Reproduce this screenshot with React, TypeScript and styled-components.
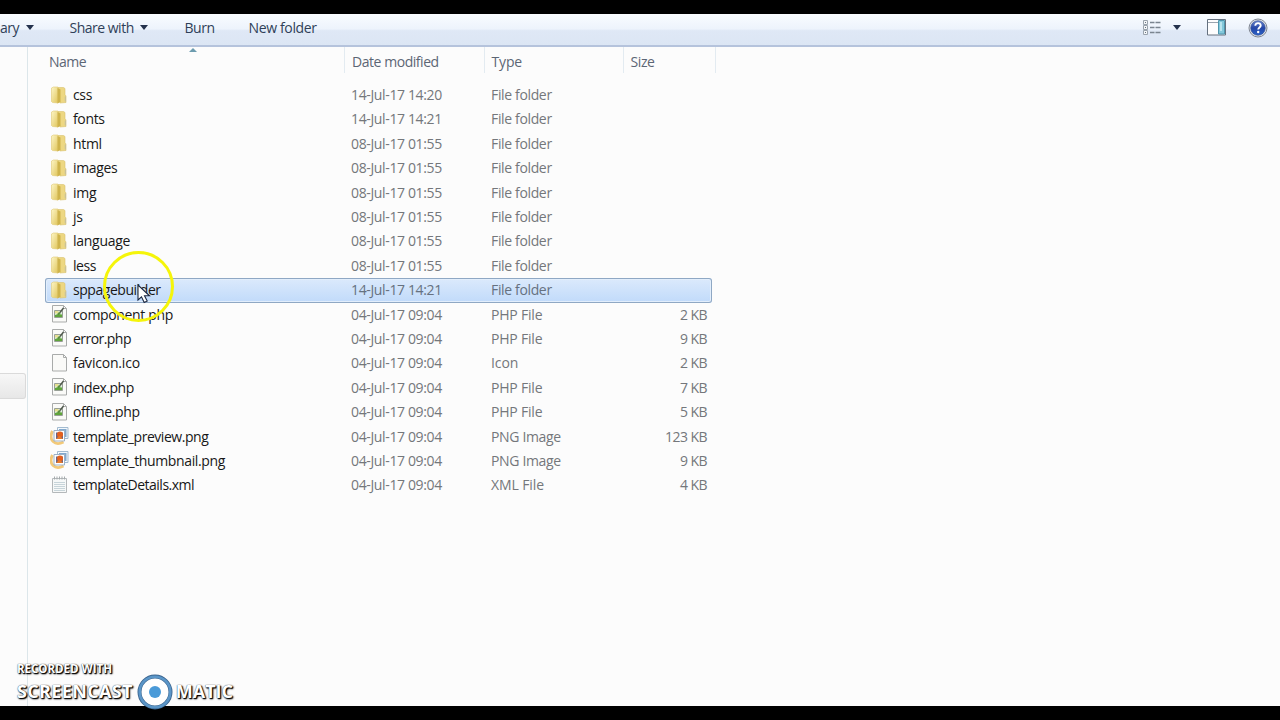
import React from 'react';
import styled, { createGlobalStyle } from 'styled-components';

const GlobalStyle = createGlobalStyle`
  * { box-sizing: border-box; }
  body { margin: 0; background: #000; overflow: hidden; }
`;

const Screen = styled.div`
  position: relative;
  width: 1280px;
  height: 720px;
  padding: 14px 0;
  display: flex;
  flex-direction: column;
  background: #000;
  font-family: 'Open Sans', 'Noto Sans', sans-serif;
  font-size: 14px;
  line-height: 20px;
  white-space: nowrap;
`;

const Label = styled.span<{ $track?: number }>`
  letter-spacing: ${p => p.$track ?? 0}px;
`;

const Toolbar = styled.div`
  flex: none;
  height: 33px;
  display: flex;
  align-items: center;
  padding: 0 12px 4px 0;
  color: #2f3f58;
  background: linear-gradient(#f9fcff 0, #edf3fc 48%, #dfe8f6 54%, #dce6f4 100%);
  border-bottom: 2px solid #b5c3dc;
`;

const Command = styled.div<{ $width: number }>`
  display: flex;
  align-items: center;
  width: ${p => p.$width}px;
`;

const Arrow = styled.span<{ $left: number }>`
  margin-left: ${p => p.$left}px;
  border: solid transparent;
  border-width: 5px 4.5px 0;
  border-top-color: #25324d;
`;

const Tools = styled.div`
  margin-left: auto;
  display: flex;
  align-items: center;
`;

const ToolIcon = styled.svg<{ $gap: number }>`
  display: block;
  margin-left: ${p => p.$gap}px;
`;

const Window = styled.div`
  flex: 1;
  min-height: 0;
  display: flex;
  background: #fcfcfc;
`;

const NavPane = styled.div`
  width: 28px;
  border-right: 1px solid #dce6ea;
  padding-top: 326px;
`;

const NavItem = styled.div`
  width: 26px;
  height: 26px;
  border: 1px solid #dadada;
  border-left: 0;
  border-radius: 0 3px 3px 0;
  background: linear-gradient(#f7f7f7, #e7e7e7);
`;

const FileList = styled.div`
  width: 688px;
  padding-left: 17px;
`;

const Header = styled.div`
  position: relative;
  display: grid;
  grid-template-columns: 300px 140px 139px 92px;
  height: 26px;
  margin-bottom: 10.2px;
  color: #5c6675;
`;

const HeaderCell = styled.div<{ $pad: number }>`
  padding: 5px 0 0 ${p => p.$pad}px;
  border-right: 1px solid #e3ebf1;
`;

const SortMark = styled.svg`
  position: absolute;
  left: 144px;
  top: 0;
`;

const Row = styled.div<{ $selected?: boolean }>`
  display: grid;
  grid-template-columns: 28px 278px 140px 130px 86px;
  align-items: center;
  width: 667px;
  height: 24.4px;
  padding-bottom: 0.6px;
  border-radius: 3px;
  color: #74777b;
  ${p => p.$selected && `
    color: #667180;
    background: linear-gradient(#dceafc, #c0dafa);
    box-shadow: inset 0 0 0 1px #8fa8c4, inset 0 0 0 2px #e2eefc;
  `}
`;

const FileName = styled.span<{ $track: number }>`
  color: #181818;
  letter-spacing: ${p => p.$track}px;
`;

const Size = styled.span`
  text-align: right;
  letter-spacing: -0.55px;
`;

const FileIcon = styled.svg`
  display: block;
  margin-left: 5px;
`;

const Highlight = styled.svg`
  position: absolute;
  left: 102px;
  top: 250px;
`;

const Watermark = styled.div`
  position: absolute;
  left: 17px;
  top: 661px;
  color: #fff;
  font-family: 'Open Sans', sans-serif;
  font-weight: 700;
  text-shadow: 0 0 1px #222, 1px 1px 1px #000, 1px 1px 2px #000;
`;

const Recorded = styled.div`
  font-size: 11.5px;
  line-height: 15px;
`;

const Brand = styled.div`
  display: flex;
  align-items: center;
  height: 30px;
  font-size: 18px;
`;

const Ring = styled.svg`
  flex: none;
  margin: 2px 3px 0 4px;
`;

type Kind = 'folder' | 'php' | 'blank' | 'png' | 'xml';

const Page = () => (
  <path d="M2.5 .5h11l3 3v13.500h-14z M13.500 .5v3h3" fill="#fafaf8" stroke="#a9abaa" />
);

const Icon = ({ kind }: { kind: Kind }) => (
  <FileIcon width="20" height="19" viewBox="0 0 20 19">
    {kind === 'folder' && (
      <>
        <defs>
          <linearGradient id="front" x2="1" y2="1">
            <stop stopColor="#fdf6c6" />
            <stop offset="1" stopColor="#e0c55c" />
          </linearGradient>
        </defs>
        <path d="M8 1.500h5.500l1.500 1v6l1 1.500v6.500l-6 .5z" fill="#edd782" stroke="#d9c16d" strokeWidth=".6" />
        <path d="M1.500 2l2-1H8v16l-5.500-.5-1-1z" fill="url(#front)" stroke="#e0c974" strokeWidth=".6" />
        <path d="M7.500 2l3 1.500v12.500L7.500 17.500z" fill="#cfb44c" />
        <path d="M15.300 10.500v5" stroke="#c4bda0" />
      </>
    )}
    {(kind === 'php' || kind === 'blank') && <Page />}
    {kind === 'php' && (
      <>
        <path d="M4.500 5.500h8v7h-8z" fill="#e3eee4" stroke="#98a096" />
        <path d="M5 10l3-1 4 .5V12H5z" fill="#5fa53a" />
        <path d="M5 6h3.500v2.500H5z" fill="#e6e08f" />
        <path d="M8 9.500l2-2" stroke="#5c8f3e" strokeWidth="2" />
        <path d="M10 7.500l3.500-4.500" stroke="#4c5549" strokeWidth="1.400" />
      </>
    )}
    {kind === 'png' && (
      <>
        <path d="M2.500 4C-2 13 5 19.500 13.500 15" fill="none" stroke="#f2c979" strokeWidth="2.800" />
        <path d="M7.500 .5h10.500v11h-10.500z" fill="#f3f8fc" stroke="#a3bbd0" />
        <path d="M9 2h7.500v8H9z" fill="#83a9cd" />
        <path d="M4 3.500h10.500v10.500h-10.500z" fill="#fff" stroke="#9db1c6" />
        <path d="M6 5.500h7v6.500H6z" fill="#6f6480" />
        <circle cx="10" cy="7.500" r="3" fill="#e4601f" />
        <path d="M6 12l3.500-3.500L13 12z" fill="#e8792a" />
      </>
    )}
    {kind === 'xml' && (
      <>
        <path d="M2.500 2.500h14v14h-14z" fill="#f6f8f8" stroke="#b4b8ba" />
        <path d="M4.500 .5v3M7 .5v3M9.500 .5v3M12 .5v3M14.500 .5v3" stroke="#a5abad" />
        <path d="M4 6.500h11M4 8.500h11M4 10.500h11M4 12.500h11M4 14.500h11" stroke="#c7d4d9" />
      </>
    )}
  </FileIcon>
);

interface Entry { name: string; date: string; type: string; size?: string; kind: Kind; track: number }

const folder = (name: string, date = '08-Jul-17 01:55', track = -0.35): Entry => ({ name, date, type: 'File folder', kind: 'folder', track });
const file = (name: string, type: string, size: string, kind: Kind, track = -0.38): Entry => ({ name, date: '04-Jul-17 09:04', type, size, kind, track });

const typeTrack: Record<string, number> = { 'File folder': -0.35, 'PHP File': -0.2, 'PNG Image': -0.35, 'XML File': -0.1, Icon: -0.1 };

const entries: Entry[] = [
  folder('css', '14-Jul-17 14:20'),
  folder('fonts', '14-Jul-17 14:21'),
  folder('html'),
  folder('images'),
  folder('img', undefined, -0.2),
  folder('js'),
  folder('language', undefined, -0.28),
  folder('less', undefined, -0.45),
  folder('sppagebuilder', '14-Jul-17 14:21', -0.45),
  file('component.php', 'PHP File', '2 KB', 'php', -0.35),
  file('error.php', 'PHP File', '9 KB', 'php', -0.55),
  file('favicon.ico', 'Icon', '2 KB', 'blank', -0.2),
  file('index.php', 'PHP File', '7 KB', 'php', -0.5),
  file('offline.php', 'PHP File', '5 KB', 'php'),
  file('template_preview.png', 'PNG Image', '123 KB', 'png', -0.46),
  file('template_thumbnail.png', 'PNG Image', '9 KB', 'png'),
  file('templateDetails.xml', 'XML File', '4 KB', 'xml', -0.5),
];

export default function App() {
  return (
    <>
      <GlobalStyle />
      <Screen>
        <Toolbar>
          <Command $width={69.5}><Label $track={-0.5}>ary</Label><Arrow $left={7} /></Command>
          <Command $width={115}><Label $track={-0.5}>Share with</Label><Arrow $left={6} /></Command>
          <Command $width={64}><Label $track={-0.45}>Burn</Label></Command>
          <Command $width={80}><Label $track={-0.35}>New folder</Label></Command>
          <Tools>
            <ToolIcon $gap={0} width="18" height="16" viewBox="0 0 18 16">
              <path d="M.5.5h4v4h-4zM.5 5.5h4v4h-4zM.5 10.5h4v4h-4z" fill="#f4f6f8" stroke="#9ba4ae" />
              <path d="M2 2.5h1M2 7.5h1M2 12.5h1" stroke="#687482" />
              <path d="M7 2.5h4.500M12.500 2.500h5M7 7.500h4.500M12.500 7.500h5M7 12.500h4.500M12.500 12.500h5" stroke="#7b8590" strokeWidth="1.300" />
            </ToolIcon>
            <Arrow $left={12} />
            <ToolIcon $gap={26} width="19" height="17" viewBox="0 0 19 17">
              <path d="M.5.5h18v15.500H.5z" fill="#fdfdfe" stroke="#65717f" />
              <path d="M1 3.500h10" stroke="#9aa4af" />
              <path d="M11.500 1.500h6v13.500h-6z" fill="#83c8db" stroke="#4f96ae" />
              <path d="M14 3v9" stroke="#b9e4ee" strokeWidth="2" />
            </ToolIcon>
            <ToolIcon $gap={22} width="20" height="20" viewBox="0 0 20 20">
              <defs>
                <linearGradient id="help" x2="0" y2="1">
                  <stop stopColor="#6885cf" /><stop offset=".5" stopColor="#2446a6" /><stop offset="1" stopColor="#2b62c9" />
                </linearGradient>
              </defs>
              <circle cx="10" cy="10" r="9" fill="#dfe3ea" stroke="#808793" />
              <circle cx="10" cy="10" r="7.300" fill="url(#help)" stroke="#35508f" strokeWidth=".6" />
              <path d="M7.300 7.800c0-3.700 5.600-3.400 5.400-.2-.1 1.900-2.500 1.900-2.500 4" fill="none" stroke="#fff" strokeWidth="1.900" />
              <circle cx="10.200" cy="14" r="1.200" fill="#fff" />
            </ToolIcon>
          </Tools>
        </Toolbar>
        <Window>
          <NavPane><NavItem /></NavPane>
          <FileList>
            <Header>
              <HeaderCell $pad={4}><Label $track={-0.5}>Name</Label></HeaderCell>
              <HeaderCell $pad={7}><Label $track={-0.45}>Date modified</Label></HeaderCell>
              <HeaderCell $pad={6.5}><Label $track={-0.15}>Type</Label></HeaderCell>
              <HeaderCell $pad={6.5}><Label $track={-0.4}>Size</Label></HeaderCell>
              <SortMark width="8" height="6" viewBox="0 0 8 6"><path d="M0 5l4-4 4 4z" fill="#6d9caf" /></SortMark>
            </Header>
            {entries.map(e => (
              <Row key={e.name} $selected={e.name === 'sppagebuilder'}>
                <Icon kind={e.kind} />
                <FileName $track={e.track}>{e.name}</FileName>
                <Label $track={-0.36}>{e.date}</Label>
                <Label $track={typeTrack[e.type]}>{e.type}</Label>
                <Size>{e.size}</Size>
              </Row>
            ))}
          </FileList>
        </Window>
        <Highlight width="74" height="74" viewBox="0 0 74 74">
          <circle cx="36.500" cy="36.500" r="34" fill="none" stroke="#f5f50a" strokeWidth="3" />
          <path d="M36 35v15l3.500-3.200 2.700 5.700 3-1.400-2.700-5.300h5z" fill="#fff" stroke="#1c2740" strokeWidth="1.100" />
        </Highlight>
        <Watermark>
          <Recorded>RECORDED WITH</Recorded>
          <Brand>
            <Label $track={0.35}>SCREENCAST</Label>
            <Ring width="36" height="36" viewBox="0 0 36 36">
              <circle cx="18" cy="18" r="15.500" fill="#fff" stroke="#3c6690" strokeWidth="4" />
              <circle cx="18" cy="18" r="15.300" fill="none" stroke="#5b96c8" strokeWidth="2.600" />
              <circle cx="18" cy="18" r="6" fill="#4a9ad8" />
            </Ring>
            <Label>MATIC</Label>
          </Brand>
        </Watermark>
      </Screen>
    </>
  );
}
